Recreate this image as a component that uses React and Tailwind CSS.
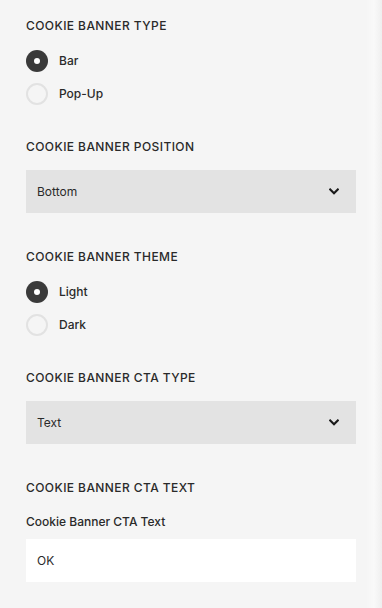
import { useState } from "react";

const font = { fontFamily: "Inter, 'Liberation Sans', Arial, sans-serif" };

function Heading({ children }) {
  return (
    <div className="h-4 text-[12px] leading-4 font-medium tracking-[0.035em] text-[#2a2a2a]">
      {children}
    </div>
  );
}

function Radio({ label, checked, onSelect }) {
  return (
    <button
      type="button"
      onClick={onSelect}
      className="flex h-[33px] w-full items-center text-left"
    >
      {checked ? (
        <span className="flex h-[22px] w-[22px] items-center justify-center rounded-full bg-[#3a3a3a]">
          <span className="h-[6px] w-[6px] rounded-full bg-white" />
        </span>
      ) : (
        <span className="h-[22px] w-[22px] rounded-full border-2 border-[#e2e2e2]" />
      )}
      <span className="ml-[11px] text-[12px] font-medium text-[#2a2a2a]">{label}</span>
    </button>
  );
}

function Chevron() {
  return (
    <svg width="10" height="7" viewBox="0 0 10 7" fill="none">
      <path d="M1.2 1.5 5 5.2 8.8 1.5" stroke="#1a1a1a" strokeWidth="2.2" strokeLinecap="square" />
    </svg>
  );
}

function Select({ value }) {
  return (
    <div className="flex h-[43px] items-center justify-between bg-[#e3e3e3] pl-[11px] pr-[17px]">
      <span className="text-[12px] text-[#2a2a2a]">{value}</span>
      <Chevron />
    </div>
  );
}

export default function App() {
  const [type, setType] = useState("Bar");
  const [theme, setTheme] = useState("Light");
  const [cta, setCta] = useState("OK");

  return (
    <div style={font} className="relative min-h-[608px] w-full bg-[#f5f5f5] px-[26px] pt-[18px]">
      <section>
        <Heading>COOKIE BANNER TYPE</Heading>
        <div className="mt-[10px]">
          {["Bar", "Pop-Up"].map((t) => (
            <Radio key={t} label={t} checked={type === t} onSelect={() => setType(t)} />
          ))}
        </div>
      </section>

      <section className="mt-[29px]">
        <Heading>COOKIE BANNER POSITION</Heading>
        <div className="mt-[15px]">
          <Select value="Bottom" />
        </div>
      </section>

      <section className="mt-[36px]">
        <Heading>COOKIE BANNER THEME</Heading>
        <div className="mt-[10px]">
          {["Light", "Dark"].map((t) => (
            <Radio key={t} label={t} checked={theme === t} onSelect={() => setTheme(t)} />
          ))}
        </div>
      </section>

      <section className="mt-[29px]">
        <Heading>COOKIE BANNER CTA TYPE</Heading>
        <div className="mt-[15px]">
          <Select value="Text" />
        </div>
      </section>

      <section className="mt-[36px]">
        <Heading>COOKIE BANNER CTA TEXT</Heading>
        <div className="mt-[18px] h-4 text-[12px] leading-4 font-medium text-[#2a2a2a]">
          Cookie Banner CTA Text
        </div>
        <input
          value={cta}
          onChange={(e) => setCta(e.target.value)}
          className="mt-[9px] block h-[43px] w-full bg-white px-[11px] text-[12px] text-[#2a2a2a] outline-none"
        />
      </section>

      <div className="pointer-events-none absolute right-0 top-0 h-full w-[16px] bg-gradient-to-r from-transparent via-white/40 to-[#efefef]" />
    </div>
  );
}
